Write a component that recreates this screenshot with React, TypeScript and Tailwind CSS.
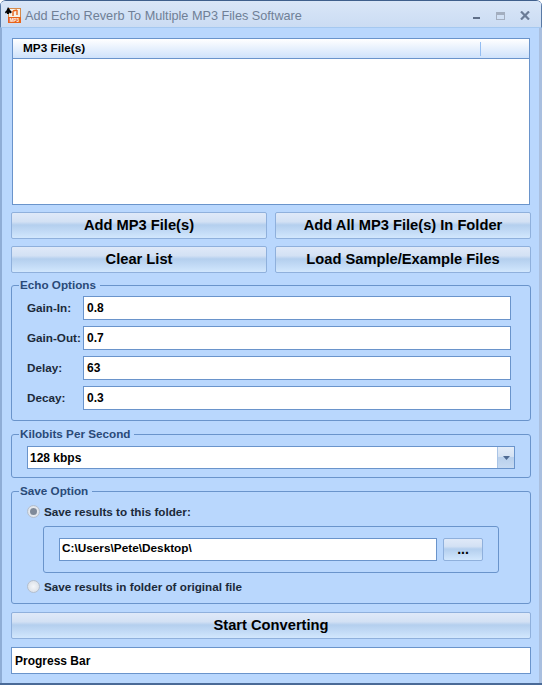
import React from "react";

const font = { fontFamily: '"Liberation Sans", Arial, sans-serif' };

function Btn({ children, className }: { children: React.ReactNode; className: string }) {
  return (
    <div
      className={
        "flex items-center justify-center rounded-[2px] border border-[#8fb0dc] bg-[linear-gradient(180deg,#dfe9f8_0%,#d3e1f4_35%,#b4cfee_48%,#c3dbf6_75%,#d2e7fd_100%)] font-bold text-black " +
        className
      }
    >
      {children}
    </div>
  );
}

function Field({ label, value }: { label: string; value: string }) {
  return (
    <div className="flex h-[24px] items-center">
      <div className="w-[56px] text-[11.7px] font-bold text-[#1c2a3a]">{label}</div>
      <div className="flex h-[24px] w-[428px] items-center border border-[#6a94cb] bg-white pl-[3px] text-[12px] font-bold text-black">
        {value}
      </div>
    </div>
  );
}

function Radio({ checked, label }: { checked?: boolean; label: string }) {
  return (
    <div className="flex items-center gap-[4px]">
      <div className="flex h-[13px] w-[13px] items-center justify-center rounded-full border border-[#b4bfce] bg-[radial-gradient(circle,#f4f6f9_0%,#d5dbe3_100%)]">
        {checked && <div className="h-[7px] w-[7px] rounded-full bg-[#7f8a99]" />}
      </div>
      <div className="text-[11.7px] font-bold text-[#1c2a3a]">{label}</div>
    </div>
  );
}

function Group({ title, className, children }: { title: string; className: string; children: React.ReactNode }) {
  return (
    <fieldset className={"rounded-[3px] border border-[#6a94cb] " + className}>
      <legend className="ml-[-8px] pl-[1px] pr-[4px] text-[11.7px] font-bold leading-[14px] text-[#2a4a78]">{title}</legend>
      {children}
    </fieldset>
  );
}

export default function App() {
  return (
    <div
      style={font}
      className="flex h-[685px] w-[542px] flex-col overflow-hidden rounded-t-[6px] border-t-[1px] border-b-[2px] border-t-[#3f5f8c] border-b-[#4a6a97] bg-[#b9d7fd]"
    >
      <div className="flex h-[27px] shrink-0 items-start border-x border-b border-x-[#5a7aa6] border-b-[#a5c8f0] bg-[linear-gradient(180deg,#d9e6f7_0%,#cbdcf3_100%)]">
        <svg width="16" height="16" viewBox="0 0 16 16" className="ml-[4px] mr-[4px] mt-[6px] shrink-0">
          <rect x="3.5" y="1.5" width="12" height="14" fill="#f6f2e8" stroke="#d58a4a" strokeWidth="1" />
          <rect x="3" y="10" width="13" height="6" fill="#e8641a" />
          <path d="M8 4v5M12 3v5M8 4l4-1" stroke="#e8641a" strokeWidth="1.4" fill="none" />
          <text x="9.5" y="15" textAnchor="middle" fontSize="4.5" fontWeight="700" fill="#fff">MP3</text>
          <path d="M3 0l2.500 3.500L7 5 5.500 6.500l-1-1L4 7H2l-.5-1.500-1 1L0 5l1.500-1.500z" fill="#000" />
        </svg>
        <div className="mt-[6px] text-[12.7px] text-[#6f7f96]">Add Echo Reverb To Multiple MP3 Files Software</div>
        <div className="ml-auto flex items-start pr-[11px]">
          <div className="mt-[16px] h-[2px] w-[7px] bg-[#5f6f88]" />
          <div className="ml-[16px] mt-[11px] h-[8px] w-[9px] border border-[#a3aebf] border-t-[3px]" />
          <svg width="10" height="9" viewBox="0 0 10 9" className="ml-[15px] mt-[10px]">
            <path d="M1 .5l8 8M9 .5l-8 8" stroke="#6b7c96" strokeWidth="2.2" />
          </svg>
        </div>
      </div>

      <div className="flex flex-1 flex-col border-l-[2px] border-r-[3px] border-l-[#8fadd6] border-r-[#a9bfdf] pl-[9px] pr-[8px] pt-[10px]">
        <div className="ml-[1px] mr-[1px] h-[167px] shrink-0 border border-[#6a94cb] bg-white">
          <div className="flex h-[20px] items-center border-b border-[#6a94cb] bg-[linear-gradient(180deg,#ffffff_0%,#cfe2fb_100%)]">
            <div className="w-[467px] pl-[10px] text-[11.8px] font-bold leading-none text-black">MP3 File(s)</div>
            <div className="h-[14px] w-px bg-[#93bdf2]" />
          </div>
        </div>

        <div className="mt-[7px] grid shrink-0 grid-cols-[256px_256px] gap-x-[8px] gap-y-[7px]">
          <Btn className="h-[27px] text-[14.7px]">Add MP3 File(s)</Btn>
          <Btn className="h-[27px] text-[14.7px]">Add All MP3 File(s) In Folder</Btn>
          <Btn className="h-[27px] text-[14.7px]">Clear List</Btn>
          <Btn className="h-[27px] text-[14.7px]">Load Sample/Example Files</Btn>
        </div>

        <Group title="Echo Options" className="mt-[5px] h-[143px] shrink-0 px-[15px]">
          <div className="mt-[4px] flex flex-col gap-[6px]">
            <Field label="Gain-In:" value="0.8" />
            <Field label="Gain-Out:" value="0.7" />
            <Field label="Delay:" value="63" />
            <Field label="Decay:" value="0.3" />
          </div>
        </Group>

        <Group title="Kilobits Per Second" className="mt-[6px] h-[51px] shrink-0 px-[15px]">
          <div className="mt-[5px] flex h-[23px] w-[488px] items-center border border-[#6a94cb] bg-white text-[12px] font-bold text-black">
            <div className="flex-1 pl-[2px]">128 kbps</div>
            <div className="flex h-full w-[17px] items-center justify-center border-l border-[#a9c4e6] bg-[linear-gradient(180deg,#e3ecf8_0%,#d5e2f3_45%,#b9d0ec_50%,#c6daf2_100%)]">
              <svg width="7" height="4" viewBox="0 0 7 4">
                <path d="M0 0h7L3.500 4z" fill="#4f6a92" />
              </svg>
            </div>
          </div>
        </Group>

        <Group title="Save Option" className="mt-[6px] h-[120px] shrink-0 px-[15px]">
          <div className="mt-[5px]">
            <Radio checked label="Save results to this folder:" />
          </div>
          <div className="ml-[16px] mt-[5px] flex h-[47px] w-[456px] items-center rounded-[3px] border border-[#6a94cb] pl-[15px]">
            <div className="flex h-[23px] w-[378px] items-center border border-[#6a94cb] bg-white pl-[2px] text-[11.8px] font-bold text-black">
              C:\Users\Pete\Desktop\
            </div>
            <Btn className="ml-[6px] h-[23px] w-[40px] text-[14px]">...</Btn>
          </div>
          <div className="mt-[5px]">
            <Radio label="Save results in folder of original file" />
          </div>
        </Group>

        <Btn className="mt-[8px] h-[27px] w-[520px] shrink-0 text-[14.7px]">Start Converting</Btn>

        <div className="mt-[8px] flex h-[27px] w-[520px] shrink-0 items-center border border-[#6a94cb] bg-white pl-[3px] text-[12px] font-bold text-black">
          Progress Bar
        </div>
      </div>
    </div>
  );
}
